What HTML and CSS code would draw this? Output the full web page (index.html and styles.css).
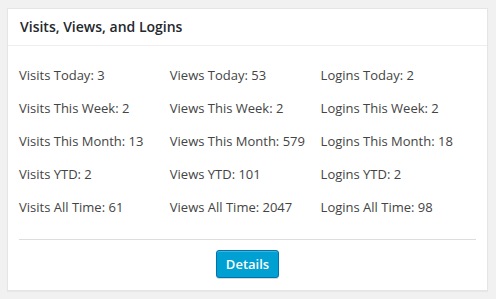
FILE: index.html
```html
<!DOCTYPE html>
<html lang="en">

<head>
  <meta charset="UTF-8" />
  <title>Visits, Views, and Logins</title>
  <link rel="stylesheet" href="styles.css">
</head>

<body>
  <div class="postbox">
    <h2 class="hndle">Visits, Views, and Logins</h2>
    <div class="inside">
      <div class="stats">
        <div>Visits Today: 3</div>
        <div>Views Today: 53</div>
        <div>Logins Today: 2</div>

        <div>Visits This Week: 2</div>
        <div>Views This Week: 2</div>
        <div>Logins This Week: 2</div>

        <div>Visits This Month: 13</div>
        <div>Views This Month: 579</div>
        <div>Logins This Month: 18</div>

        <div>Visits YTD: 2</div>
        <div>Views YTD: 101</div>
        <div>Logins YTD: 2</div>

        <div>Visits All Time: 61</div>
        <div>Views All Time: 2047</div>
        <div>Logins All Time: 98</div>
      </div>
      <div class="actions">
        <button class="button-primary">Details</button>
      </div>
    </div>
  </div>
</body>

</html>
```

FILE: styles.css
```css
* {
  box-sizing: border-box;
}

body {
  margin: 0;
  padding: 8px 8px 8px 7px;
  background: #f1f1f1;
  font-family: "Open Sans", sans-serif;
  font-size: 13px;
  color: #444;
}

.postbox {
  background: #fff;
  border: 1px solid #e5e5e5;
  box-shadow: 0 1px 1px rgba(0, 0, 0, 0.04);
}

.hndle {
  margin: 0;
  padding: 8px 12px;
  font-size: 14px;
  line-height: 1.4;
  font-weight: 600;
  color: #23282d;
  border-bottom: 1px solid #eee;
}

.inside {
  padding: 13px 11px 12px;
}

.stats {
  display: grid;
  grid-template-columns: repeat(3, 33%);
  grid-auto-rows: 33px;
  align-items: center;
  padding-bottom: 15px;
  border-bottom: 1px solid #ddd;
}

.actions {
  padding-top: 10px;
  text-align: center;
}

.button-primary {
  height: 28px;
  padding: 0 9px 1px;
  font-family: inherit;
  font-size: 13px;
  font-weight: 600;
  line-height: 26px;
  color: #fff;
  background: #00a0d2;
  border: 1px solid #0073aa;
  border-radius: 3px;
  box-shadow: inset 0 1px 0 rgba(120, 200, 230, 0.5), 0 1px 0 rgba(0, 0, 0, 0.15);
  cursor: pointer;
}

.button-primary:hover {
  background: #0091cd;
}
```
